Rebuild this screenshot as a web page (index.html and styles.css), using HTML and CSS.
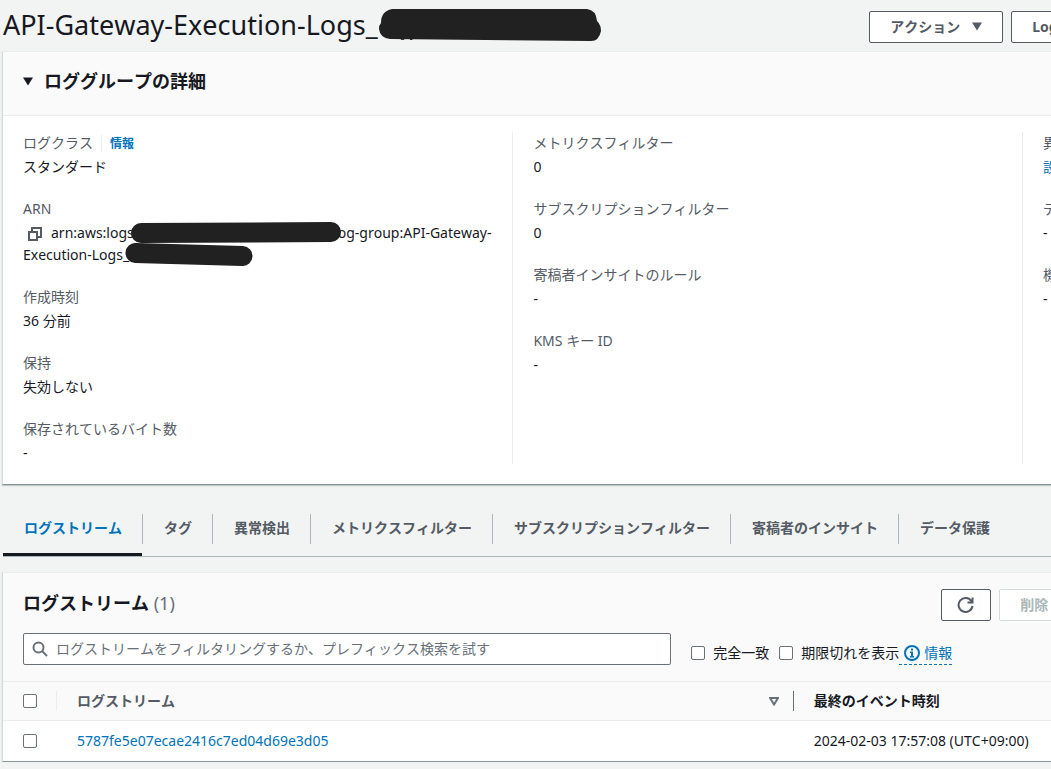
FILE: index.html
```html
<!DOCTYPE html>
<html lang="ja">
<head>
    <meta charset="UTF-8">
    <meta name="viewport" content="width=device-width, initial-scale=1.0">
    <title>CloudWatch | ロググループ</title>
    <link rel="stylesheet" href="styles.css">
</head>
<body>
    <main class="page">
        <header class="page-header">
            <h1>API-Gateway-Execution-Logs_<svg class="mask-title" width="224" height="34" viewBox="0 0 224 34"><path d="M14 1H209Q218 2 219 13Q223 17 223 23Q221 33 213 33L12 31Q2 30 1 21Q1 17 3 15Q3 3 14 1ZM22 30H27L26 32H23ZM32 30H36L34 32H32Z"/></svg></h1>
            <div class="page-actions">
                <button class="btn" type="button">アクション
                    <svg class="caret" width="10" height="9" viewBox="0 0 10 9"><path d="M0 0.500H10L5 8.500Z"/></svg>
                </button>
                <button class="btn" type="button">Logs Insights で表示</button>
            </div>
        </header>

        <section class="panel">
            <div class="panel-header">
                <button class="expander" type="button" aria-expanded="true">
                    <svg width="10" height="9" viewBox="0 0 10 9"><path d="M0 0.500H10L5 8.500Z"/></svg>
                    <span>ロググループの詳細</span>
                </button>
            </div>
            <div class="details">
                <dl class="details-column">
                    <div class="field">
                        <dt>ログクラス<a class="info" href="#">情報</a></dt>
                        <dd>スタンダード</dd>
                    </div>
                    <div class="field">
                        <dt>ARN</dt>
                        <dd>
                            <button class="copy" type="button" aria-label="ARN をコピー">
                                <svg width="16" height="16" viewBox="0 0 16 16"><path d="M2 6H10V14H2ZM5 5V2H14V11H11"/></svg>
                            </button>arn:aws:logs<svg class="mask-account" width="212" height="21" viewBox="0 0 212 21"><path d="M11 1L201 0A10 10 0 0 1 201 20L11 21A10 10 0 0 1 11 1Z"/></svg>og-group:API-Gateway-<wbr>Execution-Logs_<svg class="mask-api" width="128" height="23" viewBox="0 0 128 23"><path d="M11 0L118 3A10 10 0 0 1 117 23L10 20A10 10 0 0 1 11 0Z"/></svg>
                        </dd>
                    </div>
                    <div class="field">
                        <dt>作成時刻</dt>
                        <dd>36 分前</dd>
                    </div>
                    <div class="field">
                        <dt>保持</dt>
                        <dd>失効しない</dd>
                    </div>
                    <div class="field">
                        <dt>保存されているバイト数</dt>
                        <dd>-</dd>
                    </div>
                </dl>
                <dl class="details-column">
                    <div class="field">
                        <dt>メトリクスフィルター</dt>
                        <dd>0</dd>
                    </div>
                    <div class="field">
                        <dt>サブスクリプションフィルター</dt>
                        <dd>0</dd>
                    </div>
                    <div class="field">
                        <dt>寄稿者インサイトのルール</dt>
                        <dd>-</dd>
                    </div>
                    <div class="field">
                        <dt>KMS キー ID</dt>
                        <dd>-</dd>
                    </div>
                </dl>
                <dl class="details-column">
                    <div class="field">
                        <dt>異常検出</dt>
                        <dd><a href="#">設定</a></dd>
                    </div>
                    <div class="field">
                        <dt>データ保護</dt>
                        <dd>-</dd>
                    </div>
                    <div class="field">
                        <dt>機密データ数</dt>
                        <dd>-</dd>
                    </div>
                </dl>
            </div>
        </section>

        <ul class="tabs" role="tablist">
            <li><button class="tab active" type="button" role="tab" aria-selected="true">ログストリーム</button></li>
            <li><button class="tab" type="button" role="tab">タグ</button></li>
            <li><button class="tab" type="button" role="tab">異常検出</button></li>
            <li><button class="tab" type="button" role="tab">メトリクスフィルター</button></li>
            <li><button class="tab" type="button" role="tab">サブスクリプションフィルター</button></li>
            <li><button class="tab" type="button" role="tab">寄稿者のインサイト</button></li>
            <li><button class="tab" type="button" role="tab">データ保護</button></li>
        </ul>

        <section class="panel">
            <div class="streams-header">
                <div class="streams-title">
                    <h2>ログストリーム <span class="counter">(1)</span></h2>
                    <div class="streams-actions">
                        <button class="btn btn-icon" type="button" aria-label="更新">
                            <svg width="18" height="18" viewBox="0 0 18 18"><path d="M15.500 10A7 7 0 1 1 14.500 5.200M10.500 6.500H15.500V1.500"/></svg>
                        </button>
                        <button class="btn" type="button" disabled>削除</button>
                    </div>
                </div>
                <div class="filters">
                    <div class="search">
                        <svg width="16" height="16" viewBox="0 0 16 16"><circle cx="6.500" cy="6.500" r="5"/><path d="M10 10L15 15"/></svg>
                        <input type="search" aria-label="ログストリームをフィルタリング" placeholder="ログストリームをフィルタリングするか、プレフィックス検索を試す">
                    </div>
                    <label class="check"><input type="checkbox">完全一致</label>
                    <label class="check"><input type="checkbox">期限切れを表示</label>
                    <a class="help" href="#">
                        <svg width="16" height="16" viewBox="0 0 16 16"><circle cx="8" cy="8" r="7"/><path d="M7 3.500H9V5.500H7ZM6 6.500H9V11H10V12.500H6V11H7V8H6Z"/></svg>
                        情報
                    </a>
                </div>
            </div>
            <table class="streams">
                <thead>
                    <tr>
                        <th class="col-select"><input type="checkbox" aria-label="すべて選択"></th>
                        <th class="col-name">
                            <div class="th-content">ログストリーム
                                <svg width="10" height="9" viewBox="0 0 10 9"><path d="M1 1H9L5 7.500Z"/></svg>
                            </div>
                        </th>
                        <th class="col-time">最終のイベント時刻</th>
                    </tr>
                </thead>
                <tbody>
                    <tr>
                        <td><input type="checkbox" aria-label="ログストリームを選択"></td>
                        <td><a href="#">5787fe5e07ecae2416c7ed04d69e3d05</a></td>
                        <td>2024-02-03 17:57:08 (UTC+09:00)</td>
                    </tr>
                </tbody>
            </table>
        </section>
    </main>
</body>
</html>
```
FILE: styles.css
```css
* {
    box-sizing: border-box;
}

body {
    margin: 0;
    overflow-x: hidden;
    background-color: #f2f3f3;
    color: #16191f;
    font-family: "Noto Sans", "Noto Sans CJK JP", sans-serif;
    font-size: 14px;
    line-height: 22px;
    font-kerning: none;
}

h1, h2, dl, dd, ul {
    margin: 0;
    padding: 0;
}

button, input {
    font: inherit;
    font-kerning: none;
}

button {
    cursor: pointer;
}

a {
    color: #0073bb;
    text-decoration: none;
}

/* The console is wider than the window and runs off to the right */
.page {
    width: 145.800%;
    padding-left: 2px;
}

.page-header {
    display: flex;
    align-items: center;
    height: 51px;
}

.page-header h1 {
    flex: 0 0 57%;
    display: flex;
    align-items: center;
    padding: 0 0 2px 1px;
    font-size: 27px;
    line-height: 36px;
    font-weight: 400;
    white-space: nowrap;
}

.mask-title {
    fill: #212121;
}

.page-actions {
    display: flex;
    gap: 8px;
    margin-left: -5px;
    padding-top: 2px;
}

.btn {
    height: 32px;
    display: flex;
    align-items: center;
    gap: 12px;
    padding: 0 20px;
    border: 1px solid #545b64;
    border-radius: 2px;
    background-color: #fff;
    color: #545b64;
    font-weight: 700;
    white-space: nowrap;
}

.btn:hover {
    background-color: #fafafa;
}

.btn:disabled {
    border-color: #d5dbdb;
    color: #aab7b8;
    cursor: default;
}

.btn-icon {
    padding: 0 15px;
}

.btn-icon svg {
    fill: none;
    stroke: #545b64;
    stroke-width: 2;
}

.caret {
    fill: #545b64;
}

.panel {
    border: 1px solid #eaeded;
    border-left-color: #d5dbdb;
    border-bottom-color: #879596;
    background-color: #fff;
    box-shadow: 0 1px 1px rgba(0, 28, 36, 0.2);
}

.panel-header {
    padding: 16px 20px;
    border-bottom: 1px solid #eaeded;
    background-color: #fafafa;
}

.expander {
    display: flex;
    align-items: center;
    gap: 11px;
    height: 31px;
    padding: 0 0 5px;
    border: none;
    background: none;
    color: #16191f;
    font-size: 18px;
    font-weight: 700;
}

.expander svg {
    fill: #16191f;
}

.details {
    display: grid;
    grid-template-columns: repeat(3, 1fr);
    padding: 16px 0 20px;
}

.details-column {
    display: flex;
    flex-direction: column;
    gap: 20px;
    padding: 0 12px 0 20px;
}

.details-column + .details-column {
    border-left: 1px solid #eaeded;
}

.field dt {
    margin-bottom: 2px;
    color: #545b64;
}

.info {
    margin-left: 8px;
    padding-left: 8px;
    border-left: 1px solid #eaeded;
    font-size: 12px;
    line-height: 16px;
    font-weight: 700;
}

.copy {
    padding: 0;
    margin: 0 8px 0 4px;
    border: none;
    background: none;
    line-height: 16px;
    vertical-align: middle;
}

.copy svg {
    display: block;
    fill: none;
    stroke: #545b64;
    stroke-width: 2;
}

.mask-account, .mask-api {
    margin: -6px -4px -3px -4px;
    vertical-align: middle;
    fill: #212121;
}

.tabs {
    display: flex;
    margin: 17px 0 15px 1px;
    border-bottom: 1px solid #aab7b8;
    list-style: none;
}

.tabs li {
    display: flex;
    align-items: center;
}

.tabs li + li::before {
    content: "";
    width: 1px;
    height: 30px;
    background-color: #aab7b8;
}

.tab {
    height: 54px;
    padding: 0 20px 0 21px;
    border: none;
    border-bottom: 3px solid transparent;
    background: none;
    color: #545b64;
    font-weight: 700;
    white-space: nowrap;
}

.tab:hover {
    color: #0073bb;
}

.tab.active {
    border-bottom-color: #16191f;
    color: #0073bb;
}

.streams-header {
    padding: 16px 20px;
    background-color: #fafafa;
}

.streams-title {
    display: flex;
    align-items: flex-start;
    margin-bottom: 12px;
}

.streams-title h2 {
    flex: 0 0 61.700%;
    font-size: 18px;
    line-height: 28px;
}

.counter {
    color: #687078;
    font-weight: 400;
}

.streams-actions {
    display: flex;
    gap: 8px;
}

.filters {
    display: flex;
    align-items: center;
}

.search {
    flex: 0 0 43.550%;
    display: flex;
    align-items: center;
    gap: 8px;
    height: 32px;
    margin-right: 20px;
    padding: 0 8px;
    border: 1px solid #687078;
    border-radius: 2px;
    background-color: #fff;
}

.search svg {
    fill: none;
    stroke: #687078;
    stroke-width: 2;
}

.search input {
    flex: 1;
    padding: 0;
    border: none;
    outline: none;
    background: none;
    color: #16191f;
}

.search input::placeholder {
    color: #687078;
}

input[type="checkbox"] {
    appearance: none;
    display: block;
    width: 14px;
    height: 14px;
    margin: 0;
    border: 1px solid #687078;
    border-radius: 2px;
    background-color: #fff;
}

input[type="checkbox"]:checked {
    background-color: #0073bb;
}

.check {
    display: flex;
    align-items: center;
    gap: 8px;
    padding-top: 8px;
}

.check + .check {
    margin-left: 10px;
}

.help {
    display: flex;
    align-items: center;
    gap: 4px;
    margin-top: 8px;
    padding-left: 5px;
    border-bottom: 1px dashed #0073bb;
}

.help circle {
    fill: none;
    stroke: #0073bb;
    stroke-width: 2;
}

.help path {
    fill: #0073bb;
}

.streams {
    width: 100%;
    border-collapse: collapse;
    table-layout: fixed;
}

.streams th, .streams td {
    height: 40px;
    padding: 0 20px;
    text-align: left;
}

.streams thead {
    background-color: #fafafa;
}

/* Column separators are shorter than the header row */
.streams th {
    height: 39px;
    border-top: 1px solid #eaeded;
    border-bottom: 1px solid #eaeded;
    background-position: right center;
    background-repeat: no-repeat;
    background-size: 1px 20px;
}

.col-select {
    width: 54px;
    background-image: linear-gradient(#eaeded, #eaeded);
}

.streams .col-name {
    width: 48.200%;
    padding-right: 15px;
    background-image: linear-gradient(#687078, #687078);
    color: #545b64;
}

.th-content {
    display: flex;
    align-items: center;
    justify-content: space-between;
}

.th-content svg {
    fill: none;
    stroke: #687078;
    stroke-width: 2;
}
```
